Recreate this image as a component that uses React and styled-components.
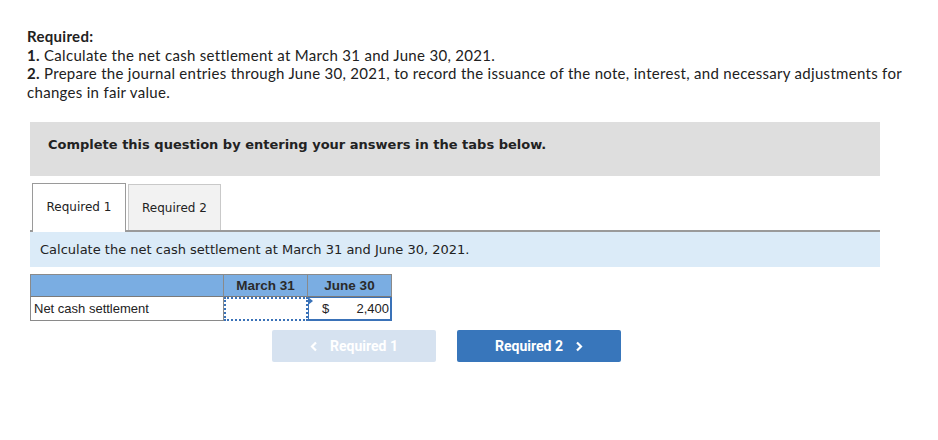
import React from "react";
import styled, { createGlobalStyle } from "styled-components";

const Global = createGlobalStyle`
  body {
    margin: 0;
    background: #fff;
  }
`;

const Page = styled.div`
  padding: 27px 0 0 27px;
  width: 911px;
`;

const Intro = styled.div`
  font-family: "Lato", "Open Sans", sans-serif;
  font-size: 15px;
  line-height: 18.5px;
  letter-spacing: 0.3px;
  color: #212121;
`;

const Strong = styled.span`
  font-weight: 700;
`;

const Notice = styled.div`
  margin: 21px 0 0 3px;
  width: 850px;
  height: 54px;
  background: #dedede;
  padding: 15px 0 0 18px;
  box-sizing: border-box;
  font-family: "DejaVu Sans", Verdana, sans-serif;
  font-weight: 700;
  font-size: 13px;
  line-height: 16px;
  color: #222;
`;

const Tabs = styled.div`
  margin: 7px 0 0 3px;
  width: 850px;
  display: flex;
  align-items: flex-end;
  gap: 2px;
  padding-left: 2px;
  box-sizing: border-box;
  border-bottom: 2px solid #9a9a9a;
  height: 49px;
`;

const Tab = styled.div`
  width: ${({ $w }) => $w}px;
  height: ${({ $active }) => ($active ? 49 : 46)}px;
  box-sizing: border-box;
  display: flex;
  align-items: center;
  justify-content: center;
  padding-bottom: ${({ $active }) => ($active ? 2 : 0)}px;
  font-family: "DejaVu Sans", Verdana, sans-serif;
  font-size: 12px;
  color: #222;
  background: ${({ $active }) => ($active ? "#fff" : "#f2f2f2")};
  border: 1px solid ${({ $active }) => ($active ? "#9a9a9a" : "#c9c9c9")};
  border-bottom: none;
  margin-bottom: ${({ $active }) => ($active ? -2 : 0)}px;
`;

const Prompt = styled.div`
  margin: 0 0 0 3px;
  width: 850px;
  height: 35px;
  background: #dbebf8;
  display: flex;
  align-items: center;
  padding-left: 10px;
  box-sizing: border-box;
  font-family: "DejaVu Sans", Verdana, sans-serif;
  font-size: 13px;
  color: #222;
`;

const Table = styled.div`
  margin: 7px 0 0 3px;
  display: grid;
  grid-template-columns: 194px 84px 84px;
  width: 362px;
  font-family: "Liberation Sans", Arial, sans-serif;
  font-size: 13px;
  color: #222;
`;

const Head = styled.div`
  height: 23px;
  background: #7aade2;
  border: 1px solid #8a8a8a;
  border-left-width: ${({ $first }) => ($first ? 1 : 0)}px;
  border-bottom: 1px solid #7a7a7a;
  box-sizing: border-box;
  display: flex;
  align-items: center;
  justify-content: center;
  font-weight: 700;
  font-size: 13.5px;
  color: #2a2a2a;
`;

const Label = styled.div`
  height: 24px;
  box-sizing: border-box;
  border: 1px solid #8a8a8a;
  border-top: none;
  display: flex;
  align-items: center;
  padding-left: 3px;
`;

const EmptyCell = styled.div`
  height: 24px;
  box-sizing: border-box;
  border: 2px dotted #3a72b8;
`;

const AmountCell = styled.div`
  position: relative;
  height: 24px;
  box-sizing: border-box;
  border: 2px solid #3a72b8;
  border-top-width: 1px;
  border-left-width: 1px;
  display: flex;
  align-items: center;
  justify-content: space-between;
  padding: 0 1px 0 13px;
`;

const Flag = styled.span`
  position: absolute;
  left: -1px;
  top: -1px;
  width: 0;
  height: 0;
  border-top: 4px solid transparent;
  border-bottom: 4px solid transparent;
  border-left: 5px solid #3a72b8;
`;

const Nav = styled.div`
  margin: 9px 0 0 245px;
  display: flex;
  gap: 21px;
`;

const NavButton = styled.div`
  width: 164px;
  height: 32px;
  border-radius: 2px;
  background: ${({ $disabled }) => ($disabled ? "#d6e2f0" : "#3876bb")};
  color: #fff;
  display: flex;
  align-items: center;
  justify-content: center;
  gap: 12px;
  font-family: "Roboto", "Liberation Sans", sans-serif;
  font-weight: 700;
  font-size: 14px;
`;

const Chevron = ({ dir }) => (
  <svg width="8" height="11" viewBox="0 0 8 11">
    <path
      d={dir === "left" ? "M6 1.5 L2 5.5 L6 9.5" : "M2 1.5 L6 5.5 L2 9.5"}
      fill="none"
      stroke="#fff"
      strokeWidth="2.2"
    />
  </svg>
);

export default function App() {
  return (
    <Page>
      <Global />
      <Intro>
        <div>
          <Strong>Required:</Strong>
        </div>
        <div>
          <Strong>1.</Strong> Calculate the net cash settlement at March 31 and June 30, 2021.
        </div>
        <div>
          <Strong>2.</Strong> Prepare the journal entries through June 30, 2021, to record the
          issuance of the note, interest, and necessary adjustments for
          <br />
          changes in fair value.
        </div>
      </Intro>
      <Notice>Complete this question by entering your answers in the tabs below.</Notice>
      <Tabs>
        <Tab $active $w={94}>Required 1</Tab>
        <Tab $w={93}>Required 2</Tab>
      </Tabs>
      <Prompt>Calculate the net cash settlement at March 31 and June 30, 2021.</Prompt>
      <Table>
        <Head $first />
        <Head>March 31</Head>
        <Head>June 30</Head>
        <Label>Net cash settlement</Label>
        <EmptyCell />
        <AmountCell>
          <Flag />
          <span>$</span>
          <span>2,400</span>
        </AmountCell>
      </Table>
      <Nav>
        <NavButton $disabled>
          <Chevron dir="left" />
          Required 1
        </NavButton>
        <NavButton>
          Required 2
          <Chevron dir="right" />
        </NavButton>
      </Nav>
    </Page>
  );
}
